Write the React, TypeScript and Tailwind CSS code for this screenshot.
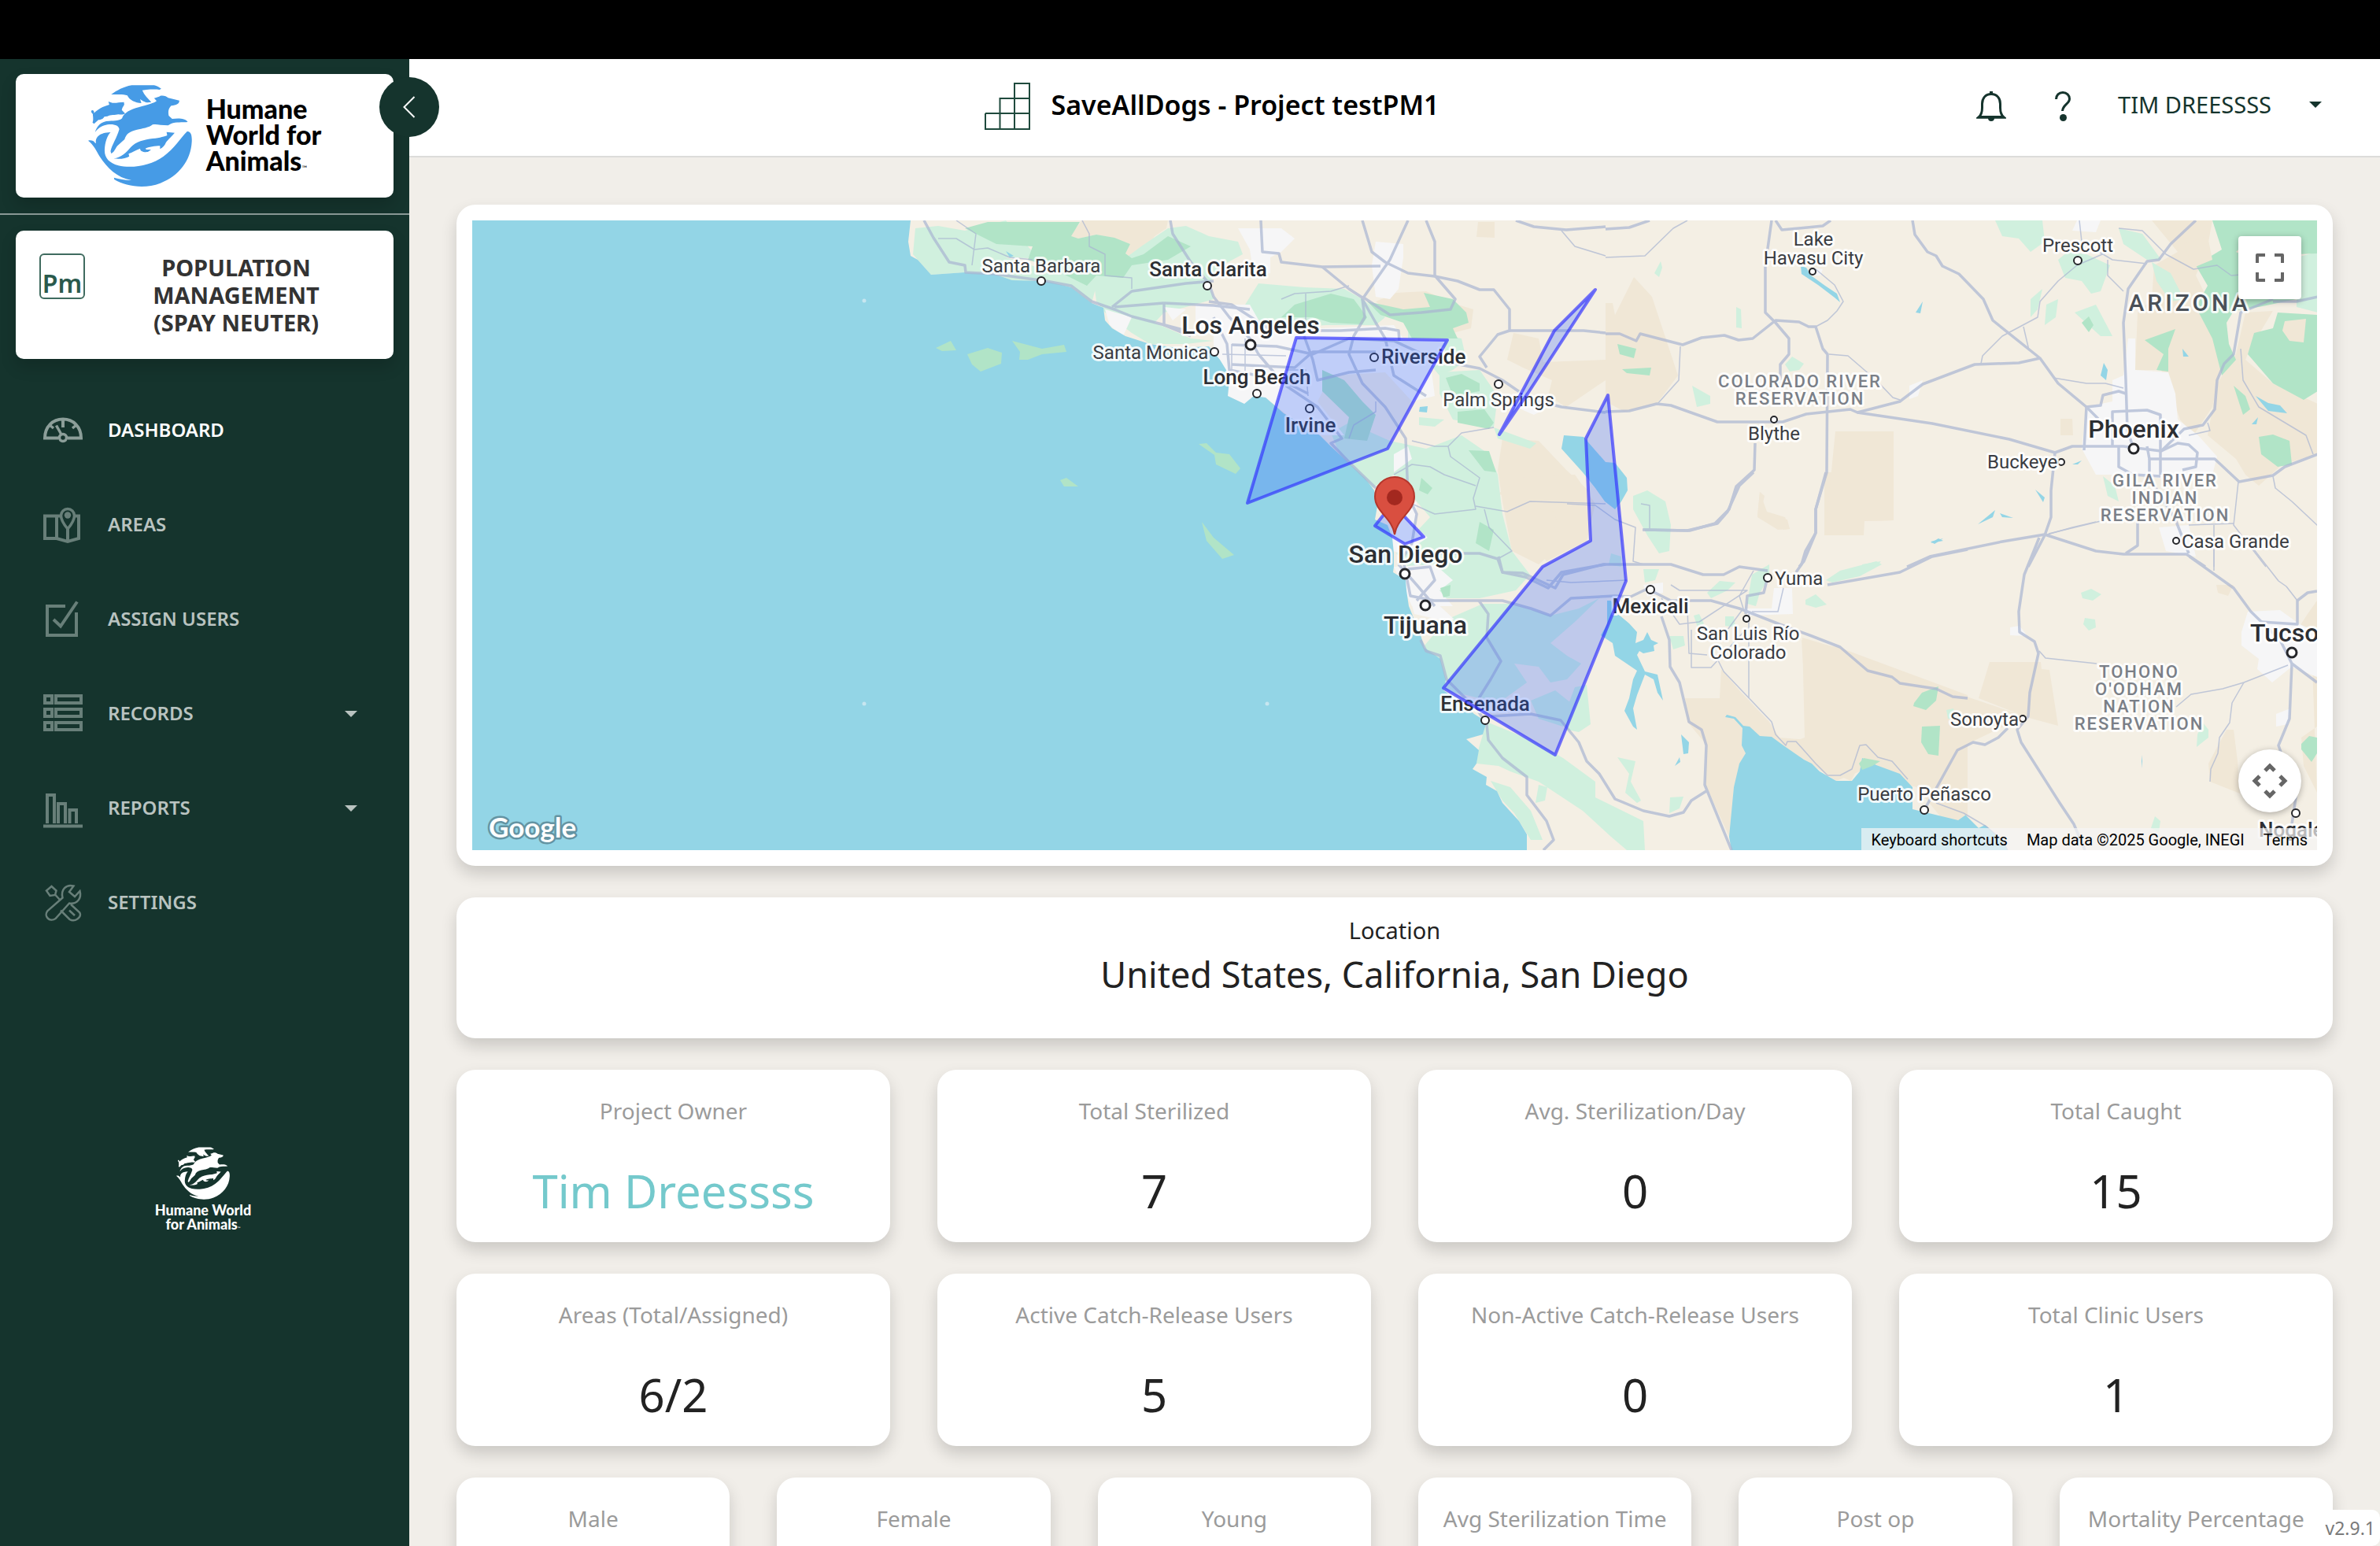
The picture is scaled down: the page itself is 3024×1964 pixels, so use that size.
import React from "react";

/* ---------- brand mark ---------- */

function BrandMark({ className }: { className: string }) {
  return (
    <svg viewBox="0 0 132 129" className={className} fill="currentColor" aria-hidden="true">
      <g transform="scale(0.3954 0.3333) translate(-278 -143)">
        <path d="M352 179C372 163 390 150 418 144H490C500 146 505 152 513 157L507 161C495 159 480 160 465 161L452 163C458 180 470 195 481 208L468 210C455 207 450 200 445 197L449 212C430 212 410 200 404 183C390 176 370 180 352 179Z" />
        <path d="M288 241C292 237 298 240 297 250C310 235 325 225 346 218L343 206L356 211C370 212 378 208 393 208L394 218L388 230L386 238L397 252C390 257 385 256 375 255C365 258 350 256 340 262L330 264C325 275 315 276 311 276L297 291L292 286C296 275 293 262 293 253C290 250 287 246 288 241Z" />
        <path d="M300 324C305 300 320 280 345 280C365 280 380 278 387 270C392 250 415 235 440 228C470 218 490 212 498 204L490 193C500 190 505 188 510 184C520 182 530 185 535 192L571 202C571 215 562 219 545 222C535 235 535 245 537 260L548 272C565 270 590 268 598 284C580 286 560 283 545 290L535 297C510 296 495 290 485 294C475 305 450 310 435 313C410 320 400 330 395 350L372 375C365 385 362 400 352 404L350 395C355 370 370 345 378 312C378 293 350 288 330 297C315 302 305 315 300 324Z" />
        <path d="M360 423C385 420 400 400 415 380C430 360 460 350 485 347C510 345 525 338 532 335L530 322L556 325C550 335 535 350 528 362C525 372 518 382 509 387V375C495 375 470 380 462 385C465 392 475 388 480 390L470 398C455 400 445 395 445 385C430 392 420 400 408 405L410 415C400 422 380 427 360 423Z" />
        <path d="M278 355C288 352 296 356 299 362L303 366C301 345 310 325 350 323C340 335 332 360 331 390C330 420 345 440 375 450C420 462 480 450 520 415C555 385 575 345 596 320C610 318 612 340 611 360C608 430 570 490 510 517C460 540 400 530 362 503L361 496C380 502 400 507 417 506C370 495 340 460 315 415C305 395 295 370 278 355Z" />
      </g>
    </svg>
  );
}

/* ---------- sidebar icons ---------- */

function NavIcon({ children }: { children: React.ReactNode }) {
  return (
    <svg viewBox="0 0 50 50" className="size-[50px] shrink-0" fill="none" stroke="currentColor" strokeWidth="4" aria-hidden="true">
      {children}
    </svg>
  );
}

const icons = {
  dashboard: (
    <NavIcon>
      <path d="M19 34.500H2C2 20 12 10.500 25 10.500S48 20 48 34.500H31" />
      <circle cx="25" cy="34" r="4.500" strokeWidth="3.500" />
      <path d="M25 11V21" />
      <path d="M16.500 18.500L23 30" strokeWidth="3.500" />
      <path d="M8 18L13 22M42 18L37 22" strokeWidth="3.500" />
    </NavIcon>
  ),
  areas: (
    <NavIcon>
      <path d="M22 13.500H2V42H17L31 46L45 42V13.500H40" />
      <path d="M17 13.500V42M31 30V46" />
      <path d="M31 30C26 24 22.500 18 22.500 13A8.500 8.500 0 0 1 39.500 13C39.500 18 36 24 31 30Z" strokeWidth="3.500" />
      <circle cx="31" cy="12.500" r="4.200" fill="currentColor" stroke="none" />
    </NavIcon>
  ),
  assign: (
    <NavIcon>
      <path d="M28 8H5V45H42V16" />
      <path d="M13 25L22 33.500L43 2.500" />
    </NavIcon>
  ),
  records: (
    <NavIcon>
      <path d="M2 2H11V11H2ZM16 2H48V11H16ZM2 19H11V28H2ZM16 19H48V28H16ZM2 36H11V45H2ZM16 36H48V45H16Z" />
    </NavIcon>
  ),
  reports: (
    <NavIcon>
      <path d="M5 44V8H14V44M19 44V19H28V44M33.500 44V27H42V44" />
      <path d="M0 47.500H50" />
    </NavIcon>
  ),
  settings: (
    <NavIcon>
      <g strokeWidth="2.500">
        <path d="M4 9.500L10.500 4L16.500 9.500L15 15L8.500 16Z" />
        <path d="M15 14.500L21 21" />
        <path d="M38.500 3.500C29 1 22 8 24.500 18.500L5.500 35C0 42 8 50 15.500 45L33 25.500C43 27 49 19 46.500 10L40 17L33 11Z" />
        <path d="M22 34.500L33.500 46C40 50 50 43 46 37L35 27" />
        <path d="M33 34.500L40 41" />
      </g>
    </NavIcon>
  ),
};

function Caret({ className }: { className: string }) {
  return (
    <svg viewBox="0 0 16 8" className={className} fill="currentColor" aria-hidden="true">
      <path d="M0 0H16L8 8Z" />
    </svg>
  );
}

type NavItem = { label: string; icon: React.ReactNode; active?: boolean; expandable?: boolean };

const navItems: NavItem[] = [
  { label: "DASHBOARD", icon: icons.dashboard, active: true },
  { label: "AREAS", icon: icons.areas },
  { label: "ASSIGN USERS", icon: icons.assign },
  { label: "RECORDS", icon: icons.records, expandable: true },
  { label: "REPORTS", icon: icons.reports, expandable: true },
  { label: "SETTINGS", icon: icons.settings },
];

const navRow = "flex h-[120px] w-full items-center pl-[55px] pr-[66px] text-left text-2xl font-semibold";

function NavEntry({ item }: { item: NavItem }) {
  const body = (
    <>
      <span className={item.active ? "text-[#8c9e99]" : "text-[#687f79]"}>{item.icon}</span>
      <span className="ml-8 flex-1 pb-0.5">{item.label}</span>
    </>
  );
  if (item.expandable) {
    return (
      <button type="button" aria-expanded="false" className={`${navRow} text-[#b9c3c0]`}>
        {body}
        <Caret className="h-2 w-4" />
      </button>
    );
  }
  return (
    <a href="#" className={`${navRow} ${item.active ? "text-white" : "text-[#b9c3c0]"}`}>
      {body}
    </a>
  );
}

function Sidebar() {
  return (
    <aside className="relative z-10 flex w-[520px] shrink-0 flex-col bg-[#15342d]">
      <div className="border-b-2 border-[#8a9996] px-5 pt-[19px] pb-5">
        <div className="flex h-[157px] items-center justify-center gap-[18px] rounded-[10px] bg-white shadow-[0_10px_20px_rgba(0,0,0,0.16)]">
          <BrandMark className="h-[129px] w-[132px] text-[#469be6]" />
          <div className="pt-1.5 font-['Lato',sans-serif] text-[34px] leading-[33px] font-black text-black">
            Humane
            <br />
            World for
            <br />
            Animals<span className="text-[9px] font-normal">™</span>
          </div>
        </div>
      </div>

      <button
        type="button"
        aria-label="Collapse sidebar"
        className="absolute top-[23px] -right-[38px] flex size-[76px] items-center justify-center rounded-full bg-[#15342d] text-white"
      >
        <svg viewBox="0 0 16 28" className="h-7 w-4" fill="none" stroke="currentColor" strokeWidth="2" aria-hidden="true">
          <path d="M14.500 1L1.500 14L14.500 27" />
        </svg>
      </button>

      <div className="mx-5 mt-5 flex items-start gap-3 rounded-[10px] bg-white py-[29px] pr-5 pl-[30px] shadow-[0_10px_20px_rgba(0,0,0,0.16)]">
        <div className="flex h-[58px] w-[58px] shrink-0 items-end justify-center rounded-md border-2 border-[#3f6b5f] text-[32px] leading-9 font-semibold text-[#2a5a4c]">
          Pm
        </div>
        <h2 className="flex-1 text-center text-[29px] leading-[35px] font-bold text-[#333333]">
          POPULATION
          <br />
          MANAGEMENT
          <br />
          (SPAY NEUTER)
        </h2>
      </div>

      <nav className="mt-[31px]">
        {navItems.map((item) => (
          <NavEntry key={item.label} item={item} />
        ))}
      </nav>

      <div className="mt-[250px] flex flex-col items-center pr-1 text-white">
        <BrandMark className="h-[67px] w-[68px]" />
        <p className="mt-1 text-center font-['Lato',sans-serif] text-lg leading-[18px] font-black">
          Humane World
          <br />
          for Animals<span className="text-[5px] font-normal">™</span>
        </p>
      </div>
    </aside>
  );
}

/* ---------- header ---------- */

function Header() {
  return (
    <header className="flex h-[125px] shrink-0 items-center border-b-2 border-[#dcdcda] bg-white pb-[3px] text-[#15342d]">
      <div className="flex flex-1 items-center justify-center gap-[27px] pl-12">
        <svg viewBox="0 0 58 60" className="h-[60px] w-[58px]" fill="none" stroke="#1f4a3d" strokeWidth="2" aria-hidden="true">
          <path d="M1 39V59H57V1H38V59M1 39H57M19.500 59V20H57" />
        </svg>
        <h1 className="pb-1 text-[34px] leading-[48px] font-semibold text-black">SaveAllDogs - Project testPM1</h1>
      </div>
      <div className="flex items-center pr-[74px]">
        <button type="button" aria-label="Notifications">
          <svg viewBox="0 0 38 38" className="size-[38px]" aria-hidden="true">
            <path
              d="M19 3.500C11.500 3.500 7.500 9 7.500 16V21C7.500 27 6 30.500 3 33H35C32 30.500 30.500 27 30.500 21V16C30.500 9 26.500 3.500 19 3.500Z"
              fill="none"
              stroke="currentColor"
              strokeWidth="3"
            />
            <path d="M17 0H21V4H17ZM15 34H23A4 4 0 0 1 15 34Z" fill="currentColor" />
            <path d="M0 34.500L4 31H34L38 34.500Z" fill="currentColor" />
          </svg>
        </button>
        <button type="button" aria-label="Help" className="ml-[62px]">
          <svg viewBox="0 0 20 38" className="h-[38px] w-5" fill="none" stroke="currentColor" strokeWidth="3" aria-hidden="true">
            <path d="M1.500 10C1.500 5 5 1.500 10 1.500S18.500 5 18.500 9.500C18.500 16 10 17 9.500 25" />
            <circle cx="10.500" cy="33.500" r="4.500" fill="currentColor" stroke="none" />
          </svg>
        </button>
        <button type="button" className="ml-[60px] flex items-center pb-1 text-[29px] leading-10">
          TIM DREESSSS
          <Caret className="ml-12 h-2 w-4" />
        </button>
      </div>
    </header>
  );
}

/* ---------- map ---------- */

const sheet = (ox: number, oy: number, kx: number, ky: number) => (pts: string) =>
  pts
    .trim()
    .split(/\s+/)
    .map((p) => {
      const [x, y] = p.split(",").map(Number);
      return `${Math.round(ox + x / kx)},${Math.round(oy + y / ky)}`;
    })
    .join(" ");

const coast = sheet(540, -10, 1.7422, 3);
const border = sheet(1100, 320, 1.96, 3);
const north = sheet(1440, -10, 1.686, 3);
const south = sheet(1600, 400, 2.0364, 3);

const water = [
  "0,0 " +
    coast(
      "30,30 25,110 30,165 45,180 75,238 150,228 215,235 255,258 330,262 385,285 430,345 457,362 460,410 475,440 505,470 560,500 620,515 690,510 715,560 728,600 735,640 732,700 768,730 790,700 815,705 855,765 935,850 960,890 990,940 1035,1010 1055,1060 1062,1120 1058,1170 1085,1190 1095,1240 1100,1300 1100,1350 1098,1370 1125,1400 1128,1440 1133,1500",
    ) +
    " " +
    border(
      "205,620 215,670 255,710 268,790 262,830 310,880 340,920 370,950 360,1000 320,1018 350,1060 345,1110 335,1130 370,1160 368,1190 395,1215 410,1260 450,1330 470,1380 470,1440",
    ) +
    " 0,800",
  border(
    "980,1440 975,1390 985,1200 1000,1110 1015,1070 1005,1040 1007,975 985,940 965,932 968,925 990,933 1010,965 1025,970 1050,1005 1080,1008 1110,1040 1160,1095 1180,1110 1200,1140 1240,1175 1280,1177 1300,1140 1305,1090 1340,1115 1400,1150 1430,1200 1430,1285 1545,1325 1565,1305",
  ) +
    " " +
    south("605,1065 640,1115 655,1105 700,1160 715,1200"),
  "1387,273 1412,275 1440,307 1452,308 1467,327 1468,343 1460,357 1452,367 1439,357 1427,340 1411,320 1384,290",
  border(
    "670,490 680,490 690,530 725,575 745,610 740,650 760,640 770,610 780,640 797,650 785,660 787,680 760,690 750,680 745,695 765,760 795,770 810,870 795,840 785,790 765,770 745,850 735,900 745,980 735,970 713,910 725,860 735,790 745,755 690,700 685,650 655,620 670,580",
  ),
  border("855,1000 875,1030 873,1070 860,1075"),
  border("850,1085 853,1105 838,1120"),
  border("1475,270 1495,252 1507,260"),
  north("418,205 430,210 440,240 470,280 495,310 502,342 490,325 455,275 420,235"),
  north("680,340 665,380 675,383"),
  north("1068,572 1075,600 1072,638 1060,620"),
  north("1235,518 1250,548 1237,548"),
  north("1393,700 1420,725 1445,735 1460,765 1420,755"),
  north("1397,780 1395,808 1385,808"),
  north("835,1133 830,1160 798,1188"),
  north("845,1145 873,1165 850,1160"),
  north("920,1055 940,1085 937,1105"),
  north("1000,960 1020,945 1012,960"),
  north("723,1243 705,1262 697,1255"),
  south("1060,838 1063,860 1061,888"),
  coast("240,148 258,165 250,172"),
  coast("1157,740 1175,738 1172,762 1155,758"),
];

const desert = [
  coast("410,30 600,30 595,60 570,90 545,160 520,175 505,155 515,120 475,95 440,85 400,100 380,90 395,60"),
  coast("1285,35 1323,35 1322,95 1283,92"),
  coast("1105,305 1170,300 1240,350 1275,370 1270,440 1230,460 1160,400 1090,380 1060,340"),
  coast("1365,460 1420,480 1430,570 1568,560 1568,640 1480,740 1440,700 1450,640 1385,590 1350,560"),
  coast("1340,860 1420,870 1480,980 1530,1060 1530,1190 1460,1280 1420,1340 1360,1290 1340,1100 1330,980"),
  border("455,20 590,10 640,120 620,260 520,340 500,300 545,200 540,150 460,130 400,80"),
  border("1212,0 1383,0 1383,183 1310,185 1308,240 1212,240"),
  border("1050,75 1062,90 1055,140 1080,175 1120,180 1125,215 1110,220 1095,195 1045,165"),
  border("955,750 1000,830 1075,950 1100,1010 1170,1020 1155,640 1250,670 1568,850 1568,1440 1440,1200 1300,1140 1240,1175 1160,1095 1060,1005 1065,1050 1035,1040 1010,970 1015,1070 985,1200 978,1400 915,1190 920,1040 870,950 865,862 950,862"),
  north("60,245 100,320 155,620 110,730 40,760 0,720 0,345 15,345 20,390"),
  north("485,955 493,835 617,833 617,1172 555,1175 553,1230 470,1230"),
  north("1170,30 1300,30 1290,130 1265,240 1290,330 1330,500 1300,740 1260,850 1230,790 1210,680 1190,600 1135,600 1140,380 1170,330 1175,200 1225,150"),
  north("1370,380 1430,375 1380,520 1370,560 1430,650 1525,730 1525,920 1450,960 1400,1040 1370,1000 1350,940 1290,850 1310,650 1350,540"),
  north("330,1065 345,1140 385,1160 395,1205 370,1210 325,1160"),
  north("975,785 1000,785 1002,850 975,850"),
  south("667,482 800,482 803,510 822,512 845,725 770,695 640,620"),
  south("183,390 300,440 560,590 760,690 620,790 530,960 460,930 340,850 310,935 215,880 135,800 190,770"),
  south("1280,740 1300,740 1310,860 1315,985 1238,940 1235,870"),
  south("1355,430 1400,415 1400,450 1355,445"),
  south("1255,190 1300,190 1285,230 1258,220"),
  south("1475,770 1515,730 1515,250 1490,300 1468,350 1500,420 1515,980 1480,880"),
];

const lightGreen = [
  coast("40,60 90,50 150,70 240,30 300,150 290,175 240,170 330,220 430,210 440,280 430,345 385,285 330,262 255,258 215,235 150,228 75,238 45,180 35,160"),
  coast("430,200 500,180 540,130 600,60 640,50 690,90 755,110 765,160 720,200 690,270 700,330 640,360 590,380 570,420 610,450 650,480 700,490 640,500 560,500 520,460 460,380 440,340"),
  coast("800,270 900,285 990,290 1030,330 1080,400 1060,430 950,430 850,440 800,420 770,350"),
  coast("1130,440 1250,480 1260,560 1230,600 1200,620 1130,480"),
  coast("960,840 1000,800 1090,870 1170,900 1250,850 1310,920 1330,1000 1340,1150 1360,1290 1400,1380 1370,1440 1290,1470 1180,1470 1130,1350 1105,1300 1180,1160 1100,1000 1050,1050 985,940"),
  coast("1200,610 1290,600 1330,700 1320,820 1230,790 1200,690"),
  coast("1155,780 1210,790 1190,815 1155,810"),
  coast("1320,820 1415,880 1400,900 1330,860"),
  border("430,500 530,545 600,520 650,480 590,570 530,650 570,700 605,730 570,790 530,800 500,740 440,730 470,800 400,880 320,850 262,830 215,660 270,560 360,500"),
  border("480,870 540,830 580,880 560,970 500,940"),
  border("590,820 620,810 630,960 600,990 570,980 560,940"),
  border("370,950 480,1020 560,1090 640,1180 640,1240 760,1330 765,1440 720,1440 680,1390 610,1290 500,1180 430,1140 400,1120 345,1110 350,1050"),
  border("380,1175 430,1200 480,1290 510,1400 480,1400 440,1300 410,1250"),
  border("500,1190 522,1200 515,1250 492,1260"),
  border("695,1085 740,1100 730,1180 755,1250 745,1260 715,1220 725,1150"),
  border("828,1240 860,1235 850,1280 825,1300"),
  border("735,90 770,70 815,110 830,200 825,300 800,310 770,240 735,140"),
  border("680,310 705,320 705,360 675,350"),
  border("760,370 800,370 790,410 765,420"),
  border("920,460 950,415 990,420 970,450 930,480"),
  border("1030,390 1075,350 1075,400 1050,460 1040,510 1020,500"),
  border("1215,410 1250,375 1340,340 1355,350 1300,395 1230,420"),
  border("1165,485 1190,465 1218,505 1190,515 1165,505"),
  border("885,545 900,540 912,575 895,590"),
  border("825,625 860,625 865,660 835,675"),
  border("965,550 985,550 990,590 965,585"),
  north("385,580 400,550 425,575 415,600 395,605"),
  north("185,660 225,700 225,730 195,740"),
  north("118,185 122,210 115,245 105,230"),
  north("280,360 290,370 292,440 280,438"),
  north("835,30 935,30 940,110 910,150 885,100 850,90"),
  north("990,150 1030,160 1080,200 1060,300 1040,310 1020,260 985,250 970,180"),
  north("1100,60 1150,80 1190,180 1160,180 1110,120"),
  north("1170,190 1210,230 1240,330 1210,340 1180,260"),
  north("945,350 970,330 965,400 940,430"),
  north("1005,380 1050,350 1085,470 1060,470"),
  north("910,330 935,290 925,370 910,400"),
  north("1480,170 1525,150 1525,380 1480,360"),
  north("1065,1005 1090,1040 1100,1100 1075,1080"),
  north("550,1340 590,1330 580,1350 550,1350"),
  south("905,220 930,205 957,225 935,250 908,240"),
  south("915,315 940,320 942,350 925,362 910,340"),
  south("1220,715 1235,740 1235,770 1203,808 1205,760"),
  south("1095,1070 1110,1090 1105,1130 1085,1115"),
  south("555,665 575,660 580,700 560,700"),
];

const green = [
  coast("85,515 118,490 130,525 100,527"),
  coast("155,540 200,515 232,535 230,575 185,605 165,580"),
  coast("255,490 320,520 370,505 375,530 320,540 290,562 270,560 272,530"),
  coast("360,1020 375,1010 400,1045 370,1045"),
  coast("668,882 685,880 705,915 735,920 760,975 750,995 705,960 702,925"),
  coast("675,1178 700,1240 745,1305 720,1320 685,1250"),
  coast("200,35 405,35 385,90 400,100 440,85 480,95 515,120 505,155 520,175 545,160 600,90 650,130 600,180 520,200 500,250 440,240 420,280 330,200 290,180 300,130 220,120 150,60"),
  coast("880,350 960,310 1010,330 1040,400 1030,425 960,420 920,400 850,400"),
  coast("1040,340 1120,370 1180,360 1165,305 1230,330 1260,380 1265,420 1230,440 1240,480 1140,480 1120,420 1070,390"),
  coast("1215,630 1250,615 1290,650 1290,680 1230,700"),
  coast("1240,760 1300,750 1320,800 1310,825 1240,800"),
  coast("940,600 990,640 1030,720 1060,770 1040,870 990,860 1000,780 940,680"),
  coast("1160,1010 1185,1050 1175,1075 1155,1060"),
  coast("1265,905 1310,910 1325,990 1300,985"),
  coast("1290,1180 1320,1210 1310,1290 1280,1260"),
  border("255,440 280,430 278,470 262,478"),
  border("1435,880 1455,840 1495,815 1490,870 1465,905 1432,890"),
  border("1455,970 1500,965 1495,1080 1470,1075 1452,1030"),
  border("1298,1110 1310,1090 1350,1100 1330,1120 1305,1135"),
  north("1300,30 1525,30 1525,155 1480,160 1480,330 1400,360 1345,375 1330,420 1335,500 1350,560 1320,620 1300,480 1265,360 1290,280 1265,200 1320,140"),
  north("1440,380 1525,390 1525,680 1495,715 1430,650 1375,540 1390,460 1430,440"),
  north("1155,485 1220,445 1205,520 1205,605 1180,600 1195,540"),
  north("1020,420 1035,395 1045,430 1035,455"),
  north("1345,660 1370,700 1380,750 1365,770"),
  north("1400,855 1430,845 1465,870 1470,960 1440,970 1405,920"),
  north("35,598 98,590 95,620 45,612"),
  north("25,500 65,520 60,555 30,540"),
  south("1475,795 1495,765 1515,770 1515,830 1500,865 1475,815"),
];

const clearings = [
  north("1455,415 1500,405 1495,495 1465,490 1450,450"),
  north("1380,100 1430,150 1400,190 1350,150"),
  north("1240,120 1290,90 1300,180 1260,210"),
];

const urban = [
  coast("755,60 850,60 880,100 850,150 825,170 825,230 790,240 780,140"),
  coast("1060,110 1120,120 1120,170 1110,290 1090,330 1060,320 1050,200"),
  coast("660,350 780,350 810,440 940,440 1100,430 1120,480 1220,480 1180,560 1190,700 1140,720 1080,610 960,620 930,720 990,850 930,850 870,780 815,705 768,730 732,700 735,620 700,540 700,470 660,430"),
  coast("460,370 520,400 500,470 470,430"),
  coast("590,360 640,370 610,410"),
  coast("1380,700 1440,740 1410,770 1370,740"),
  coast("1095,1150 1150,1100 1150,1200 1175,1240 1120,1300 1095,1290"),
  coast("1100,1350 1190,1340 1230,1400 1200,1440 1230,1500 1140,1500"),
  coast("1100,920 1130,890 1140,940 1100,990"),
  border("180,480 240,490 290,560 250,560 190,540"),
  border("760,430 810,420 810,460 770,475"),
  border("1085,440 1130,440 1132,540 1020,545 1010,520 1080,520"),
  north("1120,480 1135,480 1135,600 1205,610 1220,690 1225,790 1270,850 1310,930 1300,1000 1260,1020 1180,1010 1120,1000 1050,1000 1020,900 1030,740 1085,720 1085,640 1110,620"),
  north("1010,30 1060,30 1050,75 1000,70"),
  north("650,660 680,640 670,700 650,710"),
  north("1185,1200 1250,1190 1265,1310 1200,1290"),
  north("445,210 465,215 460,240 445,240"),
  south("1335,290 1420,285 1470,340 1515,370 1515,540 1450,500 1400,560 1360,510 1365,470 1320,420 1320,370"),
  south("1410,680 1445,660 1440,720 1410,730"),
  south("720,350 745,345 765,385 720,380"),
];

const highways = [
  coast("60,30 80,95 115,190 150,200 152,228 215,235 330,262 385,280 430,340 480,370 520,395 560,415 640,450"),
  coast("605,30 610,80 650,190 690,270 700,320 735,400 780,480 800,540 830,600 860,660 930,740 985,860 960,880 1000,950 1060,1050"),
  coast("475,360 520,300 640,270 700,260"),
  coast("590,345 700,355 780,370"),
  coast("590,345 590,430 650,470"),
  coast("480,360 590,345"),
  coast("805,30 808,150 845,155 850,190 940,208 1070,205"),
  coast("1130,30 1090,180 1030,330 1060,420 1080,480 1100,620 1170,700"),
  coast("1170,30 1190,110 1190,240 1235,330 1225,370 1160,380 1090,390 1030,320"),
  coast("1030,30 1050,150 1080,190 1130,230 1190,242 1240,260 1290,295 1320,295 1355,370 1355,450 1330,465 1290,550 1305,590"),
  coast("1355,450 1420,450 1520,450 1568,460"),
  coast("940,208 1000,290 1035,330"),
  coast("1030,330 1035,400 1010,470 1000,540 1030,650 1080,740 1125,860 1130,1080 1150,1150 1140,1260 1110,1340"),
  coast("740,505 840,510 920,540 1000,480 1100,490 1190,560 1290,595 1340,640 1400,710 1470,740 1568,762"),
  coast("830,450 980,450 1080,440 1110,450 1112,490"),
  coast("690,340 740,350 830,450"),
  coast("700,400 730,500 735,600 850,640 910,690"),
  coast("900,470 920,560 930,640 1000,610 1060,600"),
  coast("740,580 880,590 920,530 1060,530"),
  coast("1370,30 1410,55 1480,65 1568,55"),
  coast("1150,1300 1290,1300 1330,1320 1340,1370 1390,1390 1440,1430 1470,1370 1568,1340"),
  coast("1110,1340 1150,1420 1190,1500"),
  coast("1130,1360 1180,1350 1190,1400 1150,1480"),
  border("165,350 180,470 240,490 350,490 410,490 480,520 530,545 580,480 690,470 730,475 770,445 830,490 930,490 1000,520 1100,580 1180,625 1250,665 1320,755 1380,780 1400,805 1490,825 1530,855 1568,860"),
  border("400,320 410,380 460,385 540,440 560,390 660,350 830,350 910,390 960,390 1000,360 1070,375"),
  border("760,218 870,223 945,195 970,150 1000,50 1035,0"),
  border("1215,0 1190,140 1190,230 1165,300 1155,350 1140,380"),
  border("1220,430 1400,380 1480,320 1568,295"),
  border("205,640 220,680 255,700 270,790 310,850 345,900 370,960 375,1020 410,1090 470,1160 470,1230 520,1330 537,1400 512,1440"),
  border("380,930 480,920 555,945 600,1030 620,1100 650,1150 690,1245 760,1290 825,1312 860,1295 880,1250 918,1215"),
  border("805,550 825,640 828,740 850,800 875,950 905,980 918,1040 914,1190 980,1440"),
  border("350,490 375,540 370,630 405,720 380,790 350,860"),
  border("1070,400 1060,460 1020,470 1015,540"),
  north("0,62 50,58 95,30"),
  north("0,462 30,462 65,488 75,462 165,505 205,478 255,468 285,485 315,480 365,412 415,418 435,435 450,435 465,520 475,540 474,990 450,1130 450,1220 425,1330 415,1350"),
  north("355,30 342,200 343,380 365,420 393,480 393,540 375,580 375,640"),
  north("365,30 378,65 465,52 483,30"),
  north("657,30 663,85 690,150 708,165 722,205 757,235 810,330 830,410 930,555 970,650 1030,740 1055,785"),
  north("0,760 50,755 110,730 140,735 240,797 380,797 430,768 525,750 540,762 630,720 680,655 790,578 885,573 930,555"),
  north("540,762 700,805 865,865 962,915 1000,892 1110,892 1190,910 1240,825 1280,810 1305,750 1310,640 1325,575 1345,540 1360,380 1430,330"),
  north("1265,30 1210,120 1185,180 1160,185 1120,290 1110,420 1115,640 1118,830 1130,890"),
  north("1025,905 1030,740 1060,735 1065,695 1100,682 1115,690"),
  north("1085,890 1085,760 1160,752 1188,770 1188,1000"),
  north("1160,890 1165,940 1305,940 1358,1025 1430,1003 1455,970 1525,920"),
  north("1100,892 1100,970 1130,1000 1188,1005"),
  north("1190,910 1225,880 1250,885 1268,915 1265,970 1235,980"),
  north("962,915 955,1060 955,1160 940,1230 905,1350"),
  north("645,1350 695,1310 850,1255 940,1228 1050,1290 1110,1302 1245,1302 1285,1350"),
  north("1165,940 1165,1010 1220,1170 1250,1300"),
  north("1140,1180 1140,1270 1115,1300"),
  north("1430,340 1480,340 1525,320"),
  north("320,880 318,980 280,1045 265,1130 235,1185 180,1212 80,1210"),
  south("797,10 757,150 743,290 745,370 785,405 795,450 772,600 767,690 740,740 750,790 850,1020 885,1100 915,1200"),
  south("1185,80 1300,200 1345,290 1420,400 1450,490 1515,560"),
  south("1450,490 1443,700 1415,800 1440,900 1460,1000 1450,1100"),
  south("500,1040 585,820 625,790 655,797 690,770 715,735"),
  south("1370,330 1465,340 1465,250 1490,220 1515,212"),
];

const lanes = [
  coast("90,100 130,100 170,140 200,135 250,170 300,180"),
  coast("130,30 175,80 165,200"),
  coast("410,30 425,80 425,130 460,160 460,240 520,250 520,290"),
  coast("850,330 880,310 960,300 1000,280"),
  coast("905,310 905,420"),
  coast("1000,860 1010,810 1060,760 1060,720"),
  coast("1140,870 1190,890 1220,890 1250,840 1320,820"),
  coast("1470,70 1500,130 1568,165"),
  coast("1220,890 1225,930 1290,1010 1275,1090 1280,1130 1190,1150 1140,1110"),
  coast("1300,1130 1310,1200 1360,1290 1330,1320"),
  coast("1280,1120 1350,1140 1400,1100 1568,1110"),
  coast("1100,1000 1140,960 1180,970 1210,1000 1280,1040"),
  coast("740,500 740,640 M"),
  coast("770,480 770,620"),
  coast("720,540 860,545"),
  coast("860,600 905,600 910,700"),
  border("570,120 640,125 690,180 740,210 735,340 760,350"),
  border("755,120 777,125 777,220"),
  border("720,410 580,420 520,410"),
  border("830,430 850,450 1020,450 900,570 850,580 805,480"),
  border("1035,375 1000,470 1010,520 970,600"),
  border("1110,440 1095,530 1030,530"),
  border("870,520 875,690 920,695"),
  border("880,600 880,745 930,745 1015,600"),
  border("1024,540 1024,860"),
  border("945,710 960,760 1080,950 1090,1000 1115,1040 1120,1025 1140,1025 1190,1110 1220,1155 1250,1155 1280,1130 1300,1040 1315,1038 1345,1085 1380,1100 1420,1170"),
  north("0,172 85,165 145,60 175,30"),
  north("160,510 157,640 112,730"),
  north("450,215 490,275 510,340 495,375 475,410 450,435"),
  north("478,540 520,545 580,640 615,705 630,715"),
  north("805,575 808,545 850,470 925,400 930,340 970,260 1010,200 1075,150"),
  north("895,435 907,525"),
  north("960,630 1030,650 1070,650 1110,670"),
  north("1015,30 1020,110 1085,180 1160,195"),
  north("1075,180 1075,240 1110,300"),
  north("1100,60 1150,70 1200,160 1260,215 1310,200 1340,240 1400,230"),
  north("1360,520 1365,640 1400,740 1500,850 1515,920"),
  north("1290,800 1295,830 1250,850"),
  north("1430,1005 1435,1050 1470,1100 1525,1195"),
  north("1355,1025 1345,1190 1415,1350"),
  north("950,1225 1060,1175"),
  north("1250,1190 1345,1185"),
  north("1303,1190 1303,1350"),
  north("940,1230 1000,1200 1050,1180"),
  south("797,440 812,468 945,490"),
  south("1440,495 1325,560 1270,585 1190,605 1150,655"),
  south("1325,560 1295,640 1290,715 1262,770 1258,830 1240,890 1238,940"),
  south("1248,50 1248,135"),
  south("1350,50 1415,175 1435,195 1465,250"),
  south("530,1020 600,1060 660,1110 700,1160 715,1200"),
].map((p) => p.replace(" NaN,NaN", ""));

const areas = [
  coast("884,477 1217,485 1085,900 776,1107"),
  coast("1545,293 1455,450 1333,847 1395,690"),
  coast("1095,1110 1058,1195 1123,1262 1165,1235"),
  "1443,222 1415,277 1421,407 1360,440 1234,594 1376,679 1466,458",
];

type Place = { x: number; y: number; name: string; kind: string; anchor?: "start" | "middle" };

const kinds: Record<string, string> = {
  city: "fill-[#2c2e33] text-[32px] font-medium",
  town: "fill-[#2c2e33] text-[26px] font-medium",
  small: "fill-[#3a3c42] text-[24px]",
  state: "fill-[#4a5058] text-[30px] font-medium tracking-[4px]",
  reserve: "fill-[#7a7f87] text-[22px] font-medium tracking-[2px]",
};

const places: Place[] = [
  { x: 723, y: 66, name: "Santa Barbara", kind: "small" },
  { x: 935, y: 71, name: "Santa Clarita", kind: "town" },
  { x: 989, y: 144, name: "Los Angeles", kind: "city" },
  { x: 862, y: 176, name: "Santa Monica", kind: "small" },
  { x: 997, y: 208, name: "Long Beach", kind: "town" },
  { x: 1065, y: 269, name: "Irvine", kind: "town" },
  { x: 1155, y: 182, name: "Riverside", kind: "town", anchor: "start" },
  { x: 1304, y: 236, name: "Palm Springs", kind: "small" },
  { x: 1186, y: 435, name: "San Diego", kind: "city" },
  { x: 1211, y: 525, name: "Tijuana", kind: "city" },
  { x: 1497, y: 499, name: "Mexicali", kind: "town" },
  { x: 1655, y: 463, name: "Yuma", kind: "small", anchor: "start" },
  { x: 1621, y: 533, name: "San Luis Río", kind: "small" },
  { x: 1621, y: 557, name: "Colorado", kind: "small" },
  { x: 1287, y: 623, name: "Ensenada", kind: "town" },
  { x: 1845, y: 737, name: "Puerto Peñasco", kind: "small" },
  { x: 1878, y: 642, name: "Sonoyta", kind: "small", anchor: "start" },
  { x: 2118, y: 581, name: "TOHONO", kind: "reserve" },
  { x: 2118, y: 603, name: "O'ODHAM", kind: "reserve" },
  { x: 2118, y: 625, name: "NATION", kind: "reserve" },
  { x: 2118, y: 647, name: "RESERVATION", kind: "reserve" },
  { x: 2259, y: 535, name: "Tucson", kind: "city", anchor: "start" },
  { x: 2270, y: 783, name: "Nogales", kind: "town", anchor: "start" },
  { x: 1704, y: 32, name: "Lake", kind: "small" },
  { x: 1704, y: 56, name: "Havasu City", kind: "small" },
  { x: 2040, y: 40, name: "Prescott", kind: "small" },
  { x: 2182, y: 115, name: "ARIZONA", kind: "state" },
  { x: 1687, y: 212, name: "COLORADO RIVER", kind: "reserve" },
  { x: 1687, y: 234, name: "RESERVATION", kind: "reserve" },
  { x: 1654, y: 279, name: "Blythe", kind: "small" },
  { x: 1925, y: 315, name: "Buckeye", kind: "small", anchor: "start" },
  { x: 2111, y: 276, name: "Phoenix", kind: "city" },
  { x: 2151, y: 338, name: "GILA RIVER", kind: "reserve" },
  { x: 2151, y: 360, name: "INDIAN", kind: "reserve" },
  { x: 2151, y: 382, name: "RESERVATION", kind: "reserve" },
  { x: 2172, y: 416, name: "Casa Grande", kind: "small", anchor: "start" },
];

// x, y, radius
const dots: [number, number, number][] = [
  [723, 77, 5], [934, 83, 5], [989, 158, 6], [943, 167, 5], [997, 220, 5], [1064, 239, 5],
  [1146, 174, 5], [1304, 208, 5], [1185, 449, 6], [1211, 489, 6], [1497, 469, 5], [1646, 454, 5],
  [1619, 506, 4], [1287, 635, 5], [1845, 749, 5], [1970, 633, 4], [2312, 549, 6], [2317, 753, 5],
  [1703, 65, 4], [2040, 51, 5], [1654, 253, 4], [2019, 307, 4], [2111, 290, 6], [2165, 407, 4],
];

function MapDrawing() {
  return (
    <svg
      viewBox="0 0 2344 800"
      preserveAspectRatio="xMidYMid slice"
      className="h-full w-full bg-[#f4efe4] font-['Roboto',sans-serif]"
      role="img"
      aria-label="Map of Southern California and Arizona"
    >
      {desert.map((p, i) => <polygon key={i} points={p} fill="#f0e7d6" />)}
      {lightGreen.map((p, i) => <polygon key={i} points={p} fill="#d0f0de" />)}
      {urban.map((p, i) => <polygon key={i} points={p} fill="#f6f6f7" />)}
      {water.map((p, i) => <polygon key={i} points={p} fill="#93d5e6" />)}
      {green.map((p, i) => <polygon key={i} points={p} fill="#b1e4c7" />)}
      {clearings.map((p, i) => <polygon key={i} points={p} fill="#f0e7d6" />)}
      <g fill="none" stroke="#a9b5d2" strokeLinejoin="round" opacity="0.7">
        {lanes.map((p, i) => <polyline key={i} points={p} strokeWidth="1.500" />)}
        {highways.map((p, i) => <polyline key={i} points={p} strokeWidth="3.500" />)}
      </g>
      <g fill="#c7e6f0">
        <circle cx="498" cy="102" r="2.500" />
        <circle cx="498" cy="614" r="2.500" />
        <circle cx="1010" cy="614" r="2.500" />
      </g>
      {dots.map(([x, y, r]) => (
        <circle key={`${x}-${y}`} cx={x} cy={y} r={r} fill="#fff" stroke="#25262a" strokeWidth={r > 5 ? 3 : 2} />
      ))}
      {places.map((p) => (
        <text
          key={`${p.name}-${p.y}`}
          x={p.x}
          y={p.y}
          textAnchor={p.anchor ?? "middle"}
          stroke="#fff"
          strokeOpacity="0.85"
          strokeWidth="6"
          strokeLinejoin="round"
          paintOrder="stroke"
          className={kinds[p.kind]}
        >
          {p.name}
        </text>
      ))}
      {areas.map((p, i) => (
        <polygon
          key={i}
          points={p}
          fill="#3062ff"
          fillOpacity="0.27"
          stroke="#3030ff"
          strokeOpacity="0.68"
          strokeWidth="4"
          strokeLinejoin="round"
        />
      ))}
      <path
        d="M1172 399C1169 378 1147 370 1147 351A25 25 0 0 1 1197 351C1197 370 1175 378 1172 399Z"
        fill="#d94f40"
        stroke="#b5372c"
        strokeWidth="2"
      />
      <circle cx="1172" cy="352" r="10" fill="#a3281f" />
    </svg>
  );
}

function ProjectMap() {
  return (
    <section className="rounded-3xl bg-white p-5 shadow-[0_10px_20px_rgba(0,0,0,0.16)]">
      <div className="relative h-[800px] overflow-hidden font-['Roboto',sans-serif]">
        <MapDrawing />
        <svg viewBox="0 0 130 50" className="absolute bottom-0 left-[18px] h-[50px] w-[130px]" role="img" aria-label="Google">
          <text
            x="3"
            y="34"
            fill="#fff"
            stroke="#6494a3"
            strokeWidth="5"
            strokeLinejoin="round"
            paintOrder="stroke"
            className="font-['Lato',sans-serif] text-[35px] font-bold"
          >
            Google
          </text>
        </svg>
        <button
          type="button"
          aria-label="Toggle fullscreen view"
          className="absolute top-5 right-5 flex size-20 items-center justify-center rounded-sm bg-white shadow-[0_2px_8px_rgba(0,0,0,0.3)]"
        >
          <svg viewBox="0 0 36 36" className="size-9" fill="none" stroke="#666666" strokeWidth="4" strokeLinejoin="round" aria-hidden="true">
            <path d="M2 12V2H12M24 2H34V12M34 24V34H24M12 34H2V24" />
          </svg>
        </button>
        <button
          type="button"
          aria-label="Map camera controls"
          className="absolute right-5 bottom-12 flex size-20 items-center justify-center rounded-full bg-white shadow-[0_2px_8px_rgba(0,0,0,0.3)]"
        >
          <svg viewBox="0 0 46 46" className="size-[46px]" fill="none" stroke="#666666" strokeWidth="5" aria-hidden="true">
            <path d="M17 10L23 4L29 10M17 36L23 42L29 36M10 17L4 23L10 29M36 17L42 23L36 29" />
          </svg>
        </button>
        <div className="absolute right-0 bottom-0 flex text-xl leading-[26px] text-black">
          <button type="button" className="bg-[#f5f5f5]/70 px-3 pt-0.5">Keyboard shortcuts</button>
          <span className="bg-[#f5f5f5]/70 px-3 pt-0.5">Map data ©2025 Google, INEGI</span>
          <a href="#" className="bg-[#f5f5f5]/70 px-3 pt-0.5">Terms</a>
        </div>
      </div>
    </section>
  );
}

/* ---------- statistics ---------- */

type Stat = { label: string; value: string; link?: boolean };

const mainStats: Stat[] = [
  { label: "Project Owner", value: "Tim Dreessss", link: true },
  { label: "Total Sterilized", value: "7" },
  { label: "Avg. Sterilization/Day", value: "0" },
  { label: "Total Caught", value: "15" },
  { label: "Areas (Total/Assigned)", value: "6/2" },
  { label: "Active Catch-Release Users", value: "5" },
  { label: "Non-Active Catch-Release Users", value: "0" },
  { label: "Total Clinic Users", value: "1" },
];

const detailStats = ["Male", "Female", "Young", "Avg Sterilization Time", "Post op", "Mortality Percentage"];

const statCard = "rounded-3xl bg-white pt-8 pb-[25px] text-center shadow-[0_10px_20px_rgba(0,0,0,0.16)]";

function StatCard({ stat }: { stat: Stat }) {
  return (
    <article className={statCard}>
      <h3 className="text-[28px] leading-10 text-[#9b9b9b]">{stat.label}</h3>
      <p className="mt-[42px] text-[58px] leading-[80px]">
        {stat.link ? <a href="#" className="text-[#74c9cc]">{stat.value}</a> : stat.value}
      </p>
    </article>
  );
}

export default function App() {
  return (
    <div className="flex h-screen flex-col overflow-hidden font-['Noto_Sans',sans-serif] text-[#222222]">
      <div className="h-[75px] shrink-0 bg-black" />
      <div className="flex min-h-0 flex-1">
        <Sidebar />
        <div className="flex min-w-0 flex-1 flex-col bg-[#f1eee9]">
          <Header />
          <main className="min-h-0 flex-1 space-y-10 overflow-hidden px-[60px] pt-[60px]">
            <ProjectMap />
            <section className="rounded-3xl bg-white pt-[22px] pb-[49px] text-center shadow-[0_10px_20px_rgba(0,0,0,0.16)]">
              <h2 className="text-[29px] leading-10">Location</h2>
              <p className="mt-1 text-[45px] leading-[64px]">United States, California, San Diego</p>
            </section>
            <section className="grid grid-cols-4 gap-x-[60px] gap-y-10">
              {mainStats.map((stat) => (
                <StatCard key={stat.label} stat={stat} />
              ))}
            </section>
            <section className="grid grid-cols-6 gap-x-[60px]">
              {detailStats.map((label) => (
                <article key={label} className={`${statCard} min-h-[219px]`}>
                  <h3 className="text-[28px] leading-10 text-[#9b9b9b]">{label}</h3>
                </article>
              ))}
            </section>
          </main>
        </div>
      </div>
      <div className="fixed right-0 bottom-0 rounded-[10px] bg-white px-1.5 text-[23px] leading-[46px] text-[#7a7a7a]">v2.9.1</div>
    </div>
  );
}
